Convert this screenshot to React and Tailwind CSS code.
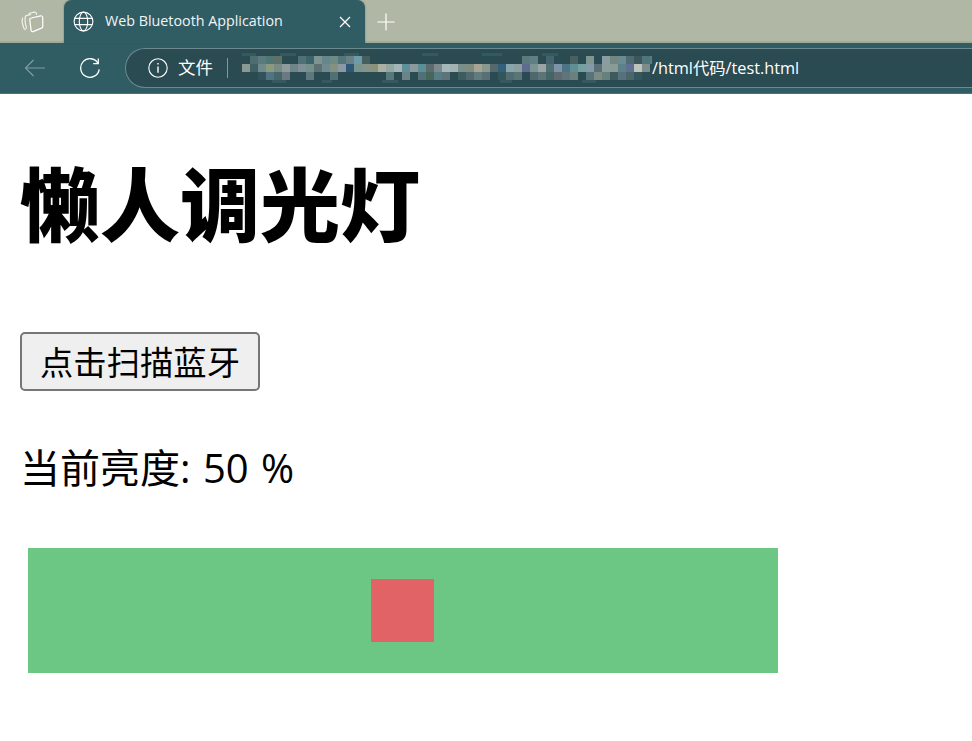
import React from "react";

const row1 = "x,#4d6d70,#5b7a7e,#4f7672,#5f7068,x,x,#4f7076,#3b636a,#7d9490,#66878a,#6f8a84,#55757a,#688086,#6f9aaa,#465f5c,x,x,x,x,x,x,x,x,x,x,x,x,x,x,x,x,x,x,x,#5b7a7e,#5f7f84,x,#46626c,x,x,#4a5f5f,x,#7f9690,x,#8a9da4,#73877f,#6a8a94,#4f6a72,#3d565c,#4f747c,#5a7a7c".split(",");
const row2 = "#8a9a92,#3f6064,#6f8a8c,#8a9a7f,#7a8a84,#8f9a9c,#6f8488,#7f9097,#74908a,#5f7070,#6f8a90,#84917f,#8a9aa4,#2f5878,#78948f,#84948a,#8c917c,#acb0a4,#93a6a2,#a3b4b6,#5f8f98,#8a9a9c,#5a8f96,#5a6c70,#7c8a90,#a4b8ba,#a0b2b2,#7a8f8a,#7f8c80,#a8a494,#87988f,#56686c,#33607a,#88a4ac,#8b9f9f,#5f6c8f,#7a9494,#9aa4a4,#4f6f74,#7c94a8,#4c7484,#5f8f94,#74a0a0,#849aa8,#5a7078,#8a9c9c,#8a9a94,#5a8288,#5f7090,#bcc4bc,#7c8c8c".split(",");
const row3 = "x,x,#33525a,#4f7484,#47666c,#6a7a80,x,x,#5f7880,x,x,#517074,x,x,x,x,x,x,#58797c,x,#6c8488,x,#517078,#46665c,#567c84,#5f7478,x,#3d5c60,#50686e,#5f7c80,#5a6f74,x,#33565c,#506c70,#5a7478,x,#4f6870,#5a7478,#456468,#5f6a70,#60747a,#6c8080,x,#56747a,#7a8c84,#66807c,#3d5a60,#56707c,#4a6668,#35565c,#2f4e54".split(",");

function Mosaic() {
  const rows = [row1, row2, row3];
  return (
    <svg width="410" height="34" viewBox="0 0 410 34" className="shrink-0">
      <g fill="#345a60">
        <rect x="0" y="2" width="14" height="3" />
        <rect x="38" y="2" width="16" height="3" />
        <rect x="102" y="2" width="15" height="3" />
        <rect x="180" y="2" width="16" height="3" />
        <rect x="240" y="2" width="20" height="3" />
        <rect x="300" y="2" width="16" height="3" />
        <rect x="30" y="29" width="14" height="3" />
        <rect x="80" y="29" width="10" height="3" />
        <rect x="140" y="29" width="16" height="3" />
        <rect x="258" y="29" width="12" height="3" />
        <rect x="340" y="29" width="14" height="3" />
      </g>
      {rows.map((r, ri) =>
        r.map((c, i) =>
          c === "x" ? null : (
            <rect key={ri + "-" + i} x={i * 8} y={5 + ri * 8} width="8" height="8" fill={c} />
          )
        )
      )}
    </svg>
  );
}

export default function App() {
  return (
    <div className="relative min-h-[741px] w-[972px] overflow-hidden bg-white font-['Open_Sans','Noto_Sans_CJK_SC',sans-serif] text-black">
      <header className="flex h-[94px] flex-col bg-[#305c64]">
        <div className="flex h-[43px] items-stretch bg-[#b0b8a5] shadow-[inset_0_-2px_0_#a3aa98]">
          <div className="flex w-[64px] items-center pl-[21px]">
            <svg width="23" height="22" viewBox="0 0 23 22" fill="none" stroke="#ffffff" strokeWidth="1.2">
              <path d="M7.5 2.5 L13 1.2 a2 2 0 0 1 2.4 1.4 L15.7 4" opacity="0.8" />
              <path d="M4.5 4.8 L10 3.4" opacity="0.8" />
              <path d="M1.8 6.8 C0.8 9 1 11 1.6 13 L2.8 17 a2.5 2.5 0 0 0 2 1.6 M4.5 5 C3.8 8 4 10 4.5 13 L5.6 17.5" opacity="0.8" />
              <path d="M10.4 7 L19.6 4.8 a1.7 1.7 0 0 1 2.1 1.7 L21.8 15.5 a1.7 1.7 0 0 1 -1.4 1.7 L12.2 20.6 a1.7 1.7 0 0 1 -2.1 -1.3 L8.8 9 a1.7 1.7 0 0 1 1.6 -2 z" />
            </svg>
          </div>
          <div className="flex h-[43px] w-[301px] items-center rounded-t-[8px] bg-[#305c64] pl-[9px] pr-[14px] shadow-[0_0_2px_rgba(60,70,50,0.6)]">
            <svg width="21" height="21" viewBox="0 0 21 21" fill="none" stroke="#ffffff" strokeWidth="1.1" className="shrink-0">
              <circle cx="10.5" cy="10.5" r="9.4" />
              <ellipse cx="10.5" cy="10.5" rx="4.2" ry="9.4" />
              <path d="M2 7.4 H19 M2 13.6 H19" />
            </svg>
            <span className="ml-[11px] flex-1 whitespace-nowrap font-['Open_Sans',sans-serif] text-[14.3px] leading-none text-[#f2f5f5]">
              Web Bluetooth Application
            </span>
            <svg width="12" height="12" viewBox="0 0 12 12" stroke="#ffffff" strokeWidth="1.3" className="shrink-0">
              <path d="M1 1 L11 11 M11 1 L1 11" />
            </svg>
          </div>
          <div className="flex flex-1 items-center pl-[12px]">
            <svg width="18" height="18" viewBox="0 0 18 18" stroke="#ffffff" strokeWidth="1.2">
              <path d="M9 0.5 V17.5 M0.5 9 H17.5" />
            </svg>
          </div>
        </div>
        <div className="flex flex-1 items-center border-b border-b-[#4f7378]">
          <div className="flex w-[125px] shrink-0 items-center pl-[24px]">
            <svg width="22" height="20" viewBox="0 0 22 20" fill="none" stroke="#7d9da1" strokeWidth="1.2">
              <path d="M21 10 H1.5 M9.5 2 L1.5 10 L9.5 18" />
            </svg>
            <svg width="22" height="22" viewBox="0 0 22 22" fill="none" stroke="#ffffff" strokeWidth="1.3" className="ml-[33px]">
              <path d="M19.3 1.5 V6.6 H14.2" />
              <path d="M19.05 6.35 A9.3 9.3 0 1 0 20.2 12.3" />
            </svg>
          </div>
          <div className="flex h-[40px] flex-1 items-center rounded-l-[20px] border border-r-0 border-[#6c8a8e] bg-[#2a4b52] pl-[22px]">
            <svg width="20" height="20" viewBox="0 0 20 20" fill="none" stroke="#ffffff" strokeWidth="1.1" className="shrink-0">
              <circle cx="10" cy="10" r="9.2" />
              <path d="M10 8.6 V14.8 M10 5 V6.6" strokeWidth="1.4" />
            </svg>
            <span className="ml-[10px] whitespace-nowrap text-[17.5px] leading-none text-white">文件</span>
            <span className="ml-[14px] h-[20px] w-px bg-[#7f9a9e]" />
            <span className="ml-[14px] flex items-center">
              <Mosaic />
            </span>
            <span className="whitespace-nowrap text-[16.3px] leading-none text-white">/html代码/test.html</span>
          </div>
        </div>
      </header>
      <main className="px-5">
        <h1 className="mt-[60px] text-[80px] font-black leading-[100px] tracking-normal">懒人调光灯</h1>
        <button className="mt-[78px] block h-[59px] w-[240px] rounded-[5px] border-2 border-[#767676] bg-[#efefef] pt-[2px] text-center text-[33.33px] leading-none">
          点击扫描蓝牙
        </button>
        <p className="mt-[50px] text-[40px] leading-[54px] [word-spacing:2px]">当前亮度: 50 %</p>
        <div className="ml-2 mt-[53px] flex h-[125px] w-[750px] items-center bg-[#6cc784] pl-[343px]">
          <div className="h-[63px] w-[63px] bg-[#e26365]" />
        </div>
      </main>
    </div>
  );
}
